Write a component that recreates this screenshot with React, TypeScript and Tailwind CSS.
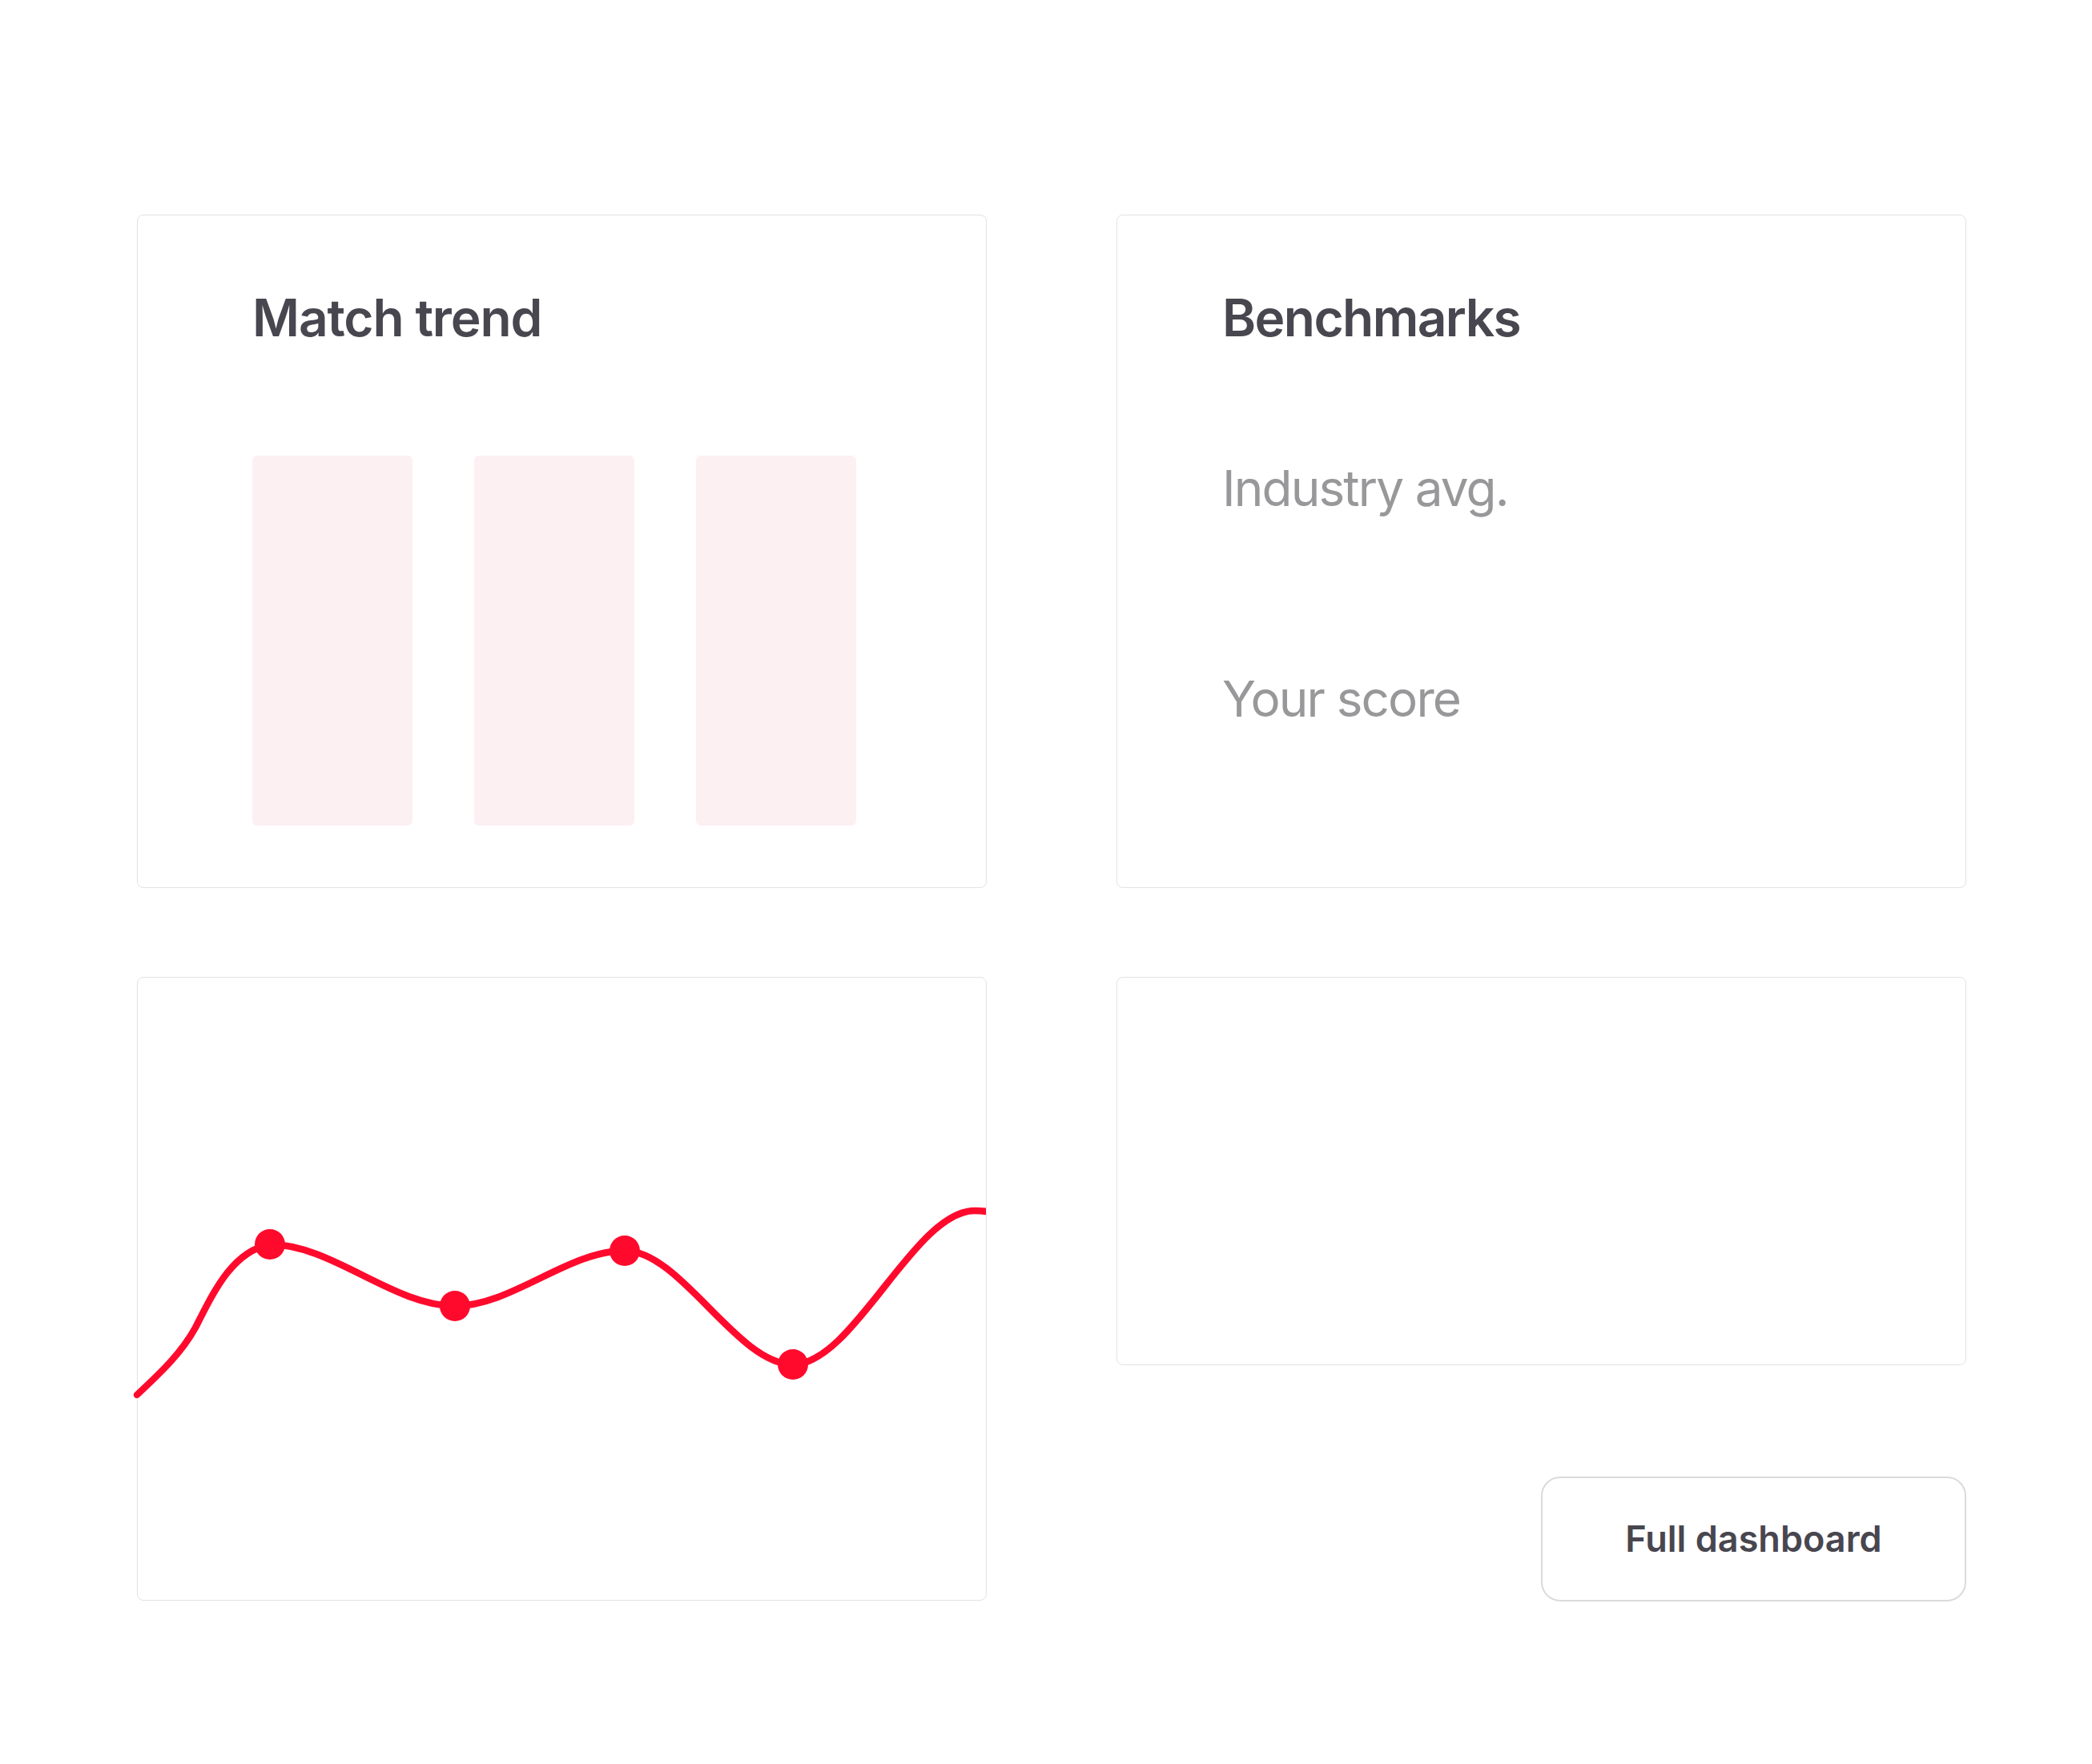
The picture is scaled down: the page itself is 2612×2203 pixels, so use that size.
import React from "react";

const font = { fontFamily: "Inter, 'Noto Sans', sans-serif" };

function Chart() {
  const pts: [number, number][] = [
    [165, 333],
    [396, 410],
    [608, 341],
    [818, 483],
  ];
  const d =
    "M -1,521 C 30,492 55,468 72,437 C 95,392 118,342 165,333 C 242,333 319,410 396,410 C 466.7,410 537.3,341 608,341 C 678,341 748,483 818,483 C 893.7,483 969.3,291 1045,291 C 1100,291 1150,330 1200,380";
  return (
    <svg
      className="block overflow-visible"
      width="1059"
      height="777"
      viewBox="0 0 1059 777"
    >
      <defs>
        <clipPath id="chartclip">
          <rect x="-12" y="-12" width="1071" height="800" />
        </clipPath>
      </defs>
      <g clipPath="url(#chartclip)">
        <path
          d={d}
          fill="none"
          stroke="#ff0a2d"
          strokeWidth="8.5"
          strokeLinecap="round"
          strokeLinejoin="round"
        />
        {pts.map(([x, y], i) => (
          <circle key={i} cx={x} cy={y} r="19" fill="#ff0a2d" />
        ))}
      </g>
    </svg>
  );
}

export default function App() {
  return (
    <div className="min-h-[2203px] w-full bg-white pt-[268px] pl-[171px]" style={font}>
      <div className="grid grid-cols-[1061px_1061px] gap-x-[162px] gap-y-[111px]">
        <div className="h-[841px] rounded-lg border border-[#e4e2e3] bg-white pl-[143px] pt-[96px]">
          <h2 className="text-[64px] font-semibold leading-none tracking-[-0.018em] text-[#48464f]">Match trend</h2>
          <div className="mt-[140px] flex gap-[77px]">
            <div className="h-[462px] w-[200px] rounded-md bg-[#fdf0f2]" />
            <div className="h-[462px] w-[200px] rounded-md bg-[#fdf0f2]" />
            <div className="h-[462px] w-[200px] rounded-md bg-[#fdf0f2]" />
          </div>
        </div>
        <div className="h-[841px] rounded-lg border border-[#e4e2e3] bg-white pl-[131px] pt-[96px]">
          <h2 className="text-[64px] font-semibold leading-none tracking-[-0.025em] text-[#48464f]">Benchmarks</h2>
          <p className="mt-[150px] text-[62px] leading-none tracking-[-0.03em] text-[#98989a]">Industry avg.</p>
          <p className="mt-[201px] text-[62px] leading-none tracking-[-0.03em] text-[#98989a]">Your score</p>
        </div>
        <div className="h-[779px] rounded-lg border border-[#e4e2e3] bg-white">
          <Chart />
        </div>
        <div className="flex flex-col items-end">
          <div className="h-[485px] w-full rounded-lg border border-[#e4e2e3] bg-white" />
          <button className="mt-[139px] flex h-[156px] w-[531px] items-center justify-center rounded-[24px] border-2 border-[#dcdadb] bg-white text-[45px] font-semibold text-[#48464f]">
            Full dashboard
          </button>
        </div>
      </div>
    </div>
  );
}
